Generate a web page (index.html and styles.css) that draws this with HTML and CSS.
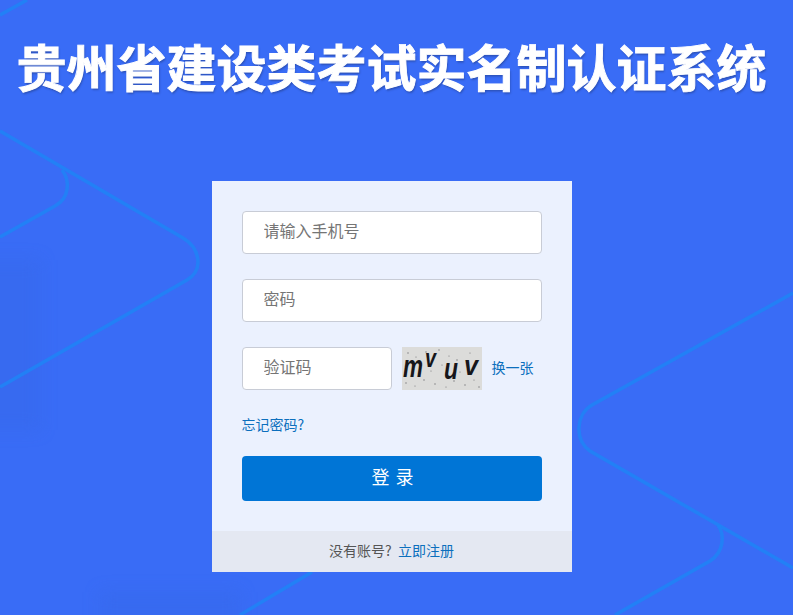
FILE: index.html
```html
<!DOCTYPE html>
<html lang="zh-CN">
  <head>
    <title>贵州省建设类考试实名制认证系统</title>
    <meta charset="UTF-8">
    <link rel="stylesheet" href="styles.css">
  </head>
  <body>
    <!-- background decoration -->
    <svg class="bg-lines" width="793" height="615" viewBox="0 0 793 615" fill="none">
      <rect class="bg-patch" x="-20" y="260" width="60" height="170"/>
      <rect class="bg-patch" x="100" y="592" width="140" height="40"/>
      <path d="M0 15 L27 0"/>
      <path d="M0 131 L183 238 C200 248 204 270 187 280 L0 387"/>
      <path d="M62 170 C70 180 70 198 55 206 L0 237"/>
      <path d="M793 293 L592 405 C576 414 574 440 590 451 L793 568"/>
      <path d="M718 525 C725 535 724 552 710 561 L615 615"/>
      <path d="M240 615 L312 572"/>
    </svg>

    <div class="page">
      <header class="site-header">
        <h1>贵州省建设类考试实名制认证系统</h1>
      </header>

      <div class="login">
        <form class="login__form">
          <input class="field" type="text" placeholder="请输入手机号">
          <input class="field" type="password" placeholder="密码">
          <div class="captcha-row">
            <input class="field field--short" type="text" placeholder="验证码">
            <svg class="captcha" width="80" height="43" viewBox="0 0 80 43">
              <rect width="80" height="43" fill="#dcdcda"/>
              <g fill="#77777a">
                <circle cx="6" cy="6" r=".7"/><circle cx="14" cy="10" r=".6"/><circle cx="24" cy="5" r=".7"/>
                <circle cx="37" cy="3" r=".7"/><circle cx="47" cy="9" r=".6"/><circle cx="55" cy="13" r=".7"/>
                <circle cx="68" cy="6" r=".6"/><circle cx="75" cy="14" r=".7"/><circle cx="4" cy="36" r=".7"/>
                <circle cx="13" cy="39" r=".6"/><circle cx="22" cy="33" r=".7"/><circle cx="33" cy="37" r=".7"/>
                <circle cx="44" cy="40" r=".6"/><circle cx="52" cy="34" r=".7"/><circle cx="63" cy="38" r=".7"/>
                <circle cx="72" cy="33" r=".6"/><circle cx="77" cy="40" r=".7"/><circle cx="29" cy="24" r=".6"/>
                <circle cx="40" cy="18" r=".6"/><circle cx="58" cy="25" r=".6"/><circle cx="9" cy="29" r=".6"/>
              </g>
              <g class="captcha__text">
                <text x="1" y="30" font-size="31" textLength="20" lengthAdjust="spacingAndGlyphs">m</text>
                <text x="23" y="20" font-size="26" textLength="11" lengthAdjust="spacingAndGlyphs">v</text>
                <text x="42" y="32" font-size="29" textLength="14" lengthAdjust="spacingAndGlyphs">u</text>
                <text x="62" y="28" font-size="28" textLength="14" lengthAdjust="spacingAndGlyphs">v</text>
              </g>
            </svg>
            <a class="link captcha-row__change" href="#">换一张</a>
          </div>
          <a class="link forgot" href="#">忘记密码?</a>
          <button class="btn-login" type="button">登 录</button>
        </form>
        <div class="login__footer">
          没有账号? <a class="link login__register" href="#">立即注册</a>
        </div>
      </div>
    </div>
  </body>
</html>
```

FILE: styles.css
```css
* {
  box-sizing: border-box;
}
html, body {
  margin: 0;
  padding: 0;
  height: 100%;
  overflow: hidden;
}
body {
  position: relative;
  background-color: #396cf6;
  font-family: "Noto Sans CJK SC", "Liberation Sans", sans-serif;
  font-size: 14px;
  color: #555;
}

.bg-lines {
  position: absolute;
  top: 0;
  left: 0;
}
.bg-lines path {
  stroke: #1f84f6;
  stroke-width: 3.5;
  stroke-opacity: .85;
  filter: blur(.6px);
}
.bg-patch {
  fill: #3468e6;
  fill-opacity: .35;
  filter: blur(8px);
}

.page {
  position: relative;
  width: 783px;
}

.site-header {
  padding-top: 29px;
  height: 181px;
  text-align: center;
}
.site-header h1 {
  margin: 0;
  font-size: 50px;
  line-height: 72px;
  font-weight: 700;
  color: #fff;
  white-space: nowrap;
  -webkit-text-stroke: .9px #fff;
  text-shadow: 1px 2px 2px rgba(30, 50, 110, .45);
}

.login {
  width: 360px;
  margin: 0 auto;
  background-color: #ebf1fe;
}
.login__form {
  display: flex;
  flex-direction: column;
  padding: 30px;
}
.login__footer {
  height: 41px;
  line-height: 39px;
  text-align: center;
  background-color: #e4e8f2;
  color: #555;
}
.login__register {
  margin-left: 3px;
}

.field {
  display: block;
  width: 100%;
  height: 43px;
  margin-bottom: 25px;
  padding: 0 21px 5px;
  border: 1px solid #c8ccd6;
  border-radius: 4px;
  background-color: #fff;
  font-family: inherit;
  font-size: 16px;
}
.field::placeholder {
  color: #757575;
  opacity: 1;
}
.field--short {
  width: 150px;
  margin-bottom: 0;
}

.captcha-row {
  display: flex;
  align-items: center;
  margin-bottom: 25px;
}
.captcha {
  display: block;
  margin-left: 10px;
  overflow: visible;
}
.captcha__text {
  font-family: "Liberation Sans", sans-serif;
  font-style: italic;
  font-weight: 700;
  fill: #16161a;
}
.captcha-row__change {
  margin-left: 10px;
  padding-bottom: 3px;
}

.link {
  color: #0c6fbd;
  text-decoration: none;
}
.forgot {
  align-self: flex-start;
  line-height: 18px;
  margin-bottom: 23px;
}

.btn-login {
  height: 45px;
  padding: 0 0 5px 3px;
  border: none;
  border-radius: 4px;
  background-color: #0075d6;
  color: #fff;
  font-family: inherit;
  font-size: 18px;
  letter-spacing: 1px;
}
```
